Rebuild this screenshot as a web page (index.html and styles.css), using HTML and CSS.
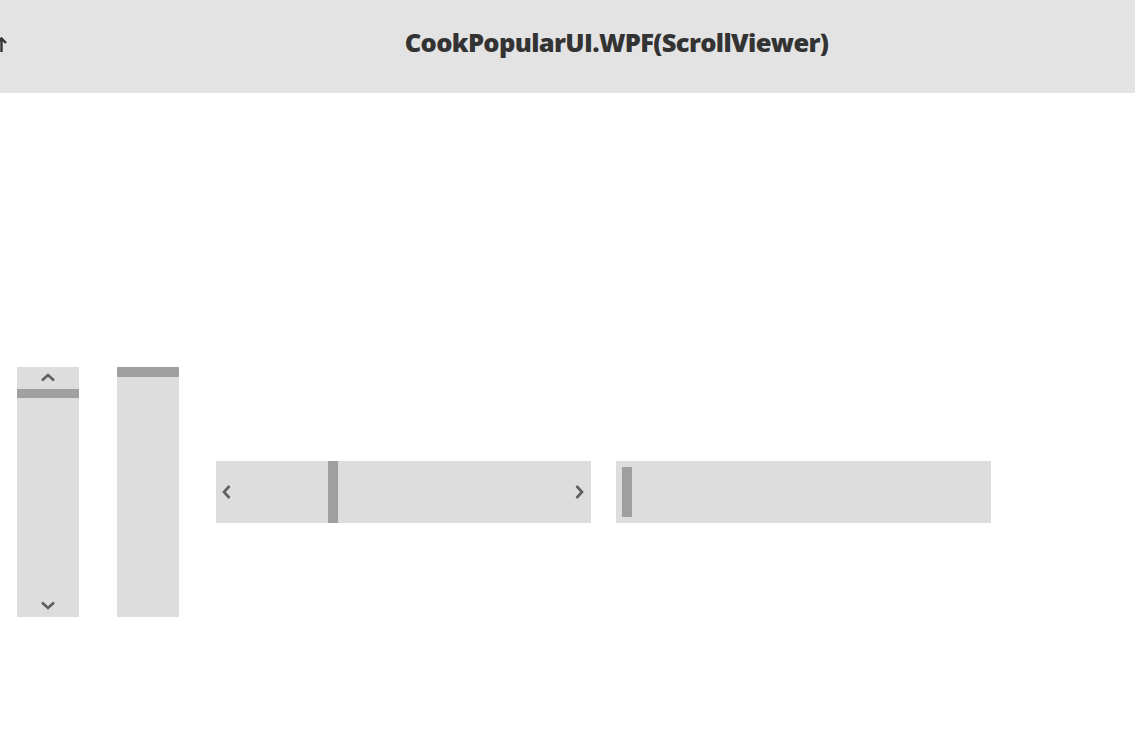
FILE: index.html
```html
<!DOCTYPE html>
<html>
<head>
<meta charset="utf-8">
<link rel="stylesheet" href="styles.css">
</head>
<body>
<header class="header">
  <svg class="back" width="10" height="20" viewBox="0 0 10 20"><path d="M-3 7 L1.5 2.5 L6 7 M1.5 3 L1.5 16" fill="none" stroke="#333" stroke-width="2.4"/></svg>
  <h1 class="title">CookPopularUI.WPF(ScrollViewer)</h1>
</header>
<main class="content">
  <div class="vbar">
    <div class="btn-v up"><svg width="16" height="9" viewBox="0 0 16 9"><path d="M2 7.5 L8 2 L14 7.5" fill="none" stroke="#5f5f5f" stroke-width="2.6"/></svg></div>
    <div class="vtrack"><div class="vthumb"></div></div>
    <div class="btn-v down"><svg width="16" height="9" viewBox="0 0 16 9"><path d="M2 1.5 L8 7 L14 1.5" fill="none" stroke="#5f5f5f" stroke-width="2.6"/></svg></div>
  </div>
  <div class="vbar plain">
    <div class="vthumb2"></div>
  </div>
  <div class="hbar">
    <div class="btn-h left"><svg width="9" height="16" viewBox="0 0 9 16"><path d="M7.5 2 L2 8 L7.5 14" fill="none" stroke="#5f5f5f" stroke-width="2.6"/></svg></div>
    <div class="htrack"><div class="hthumb"></div></div>
    <div class="btn-h right"><svg width="9" height="16" viewBox="0 0 9 16"><path d="M1.5 2 L7 8 L1.5 14" fill="none" stroke="#5f5f5f" stroke-width="2.6"/></svg></div>
  </div>
  <div class="hbar plain2">
    <div class="hthumb2"></div>
  </div>
</main>
</body>
</html>
```
FILE: styles.css
```css
* { box-sizing: border-box; }
html, body { margin: 0; padding: 0; background: #ffffff; }
body { width: 1135px; height: 746px; overflow: hidden; font-family: "Open Sans", "Noto Sans", sans-serif; }
.header {
  position: relative;
  height: 93px;
  background: #e3e3e3;
  display: flex;
  align-items: center;
  justify-content: center;
  padding-left: 98px;
}
.back { position: absolute; left: 0; top: 36px; }
.title {
  margin: 0;
  font-family: "Open Sans", sans-serif;
  font-weight: 800;
  font-size: 25.5px;
  color: #333333;
  letter-spacing: -0.65px;
  transform: translate(0px, -5px);
}
.content {
  display: flex;
  align-items: center;
  padding: 274px 0 0 17px;
}
.vbar {
  width: 62px;
  height: 250px;
  background: #dddddd;
  display: flex;
  flex-direction: column;
}
.vbar.plain { margin-left: 38px; }
.btn-v {
  height: 22px;
  display: flex;
  align-items: center;
  justify-content: center;
  padding-bottom: 2px;
}
.btn-v svg { display: block; }
.vtrack { flex: 1; }
.vthumb { height: 9px; background: #a0a0a0; }
.vthumb2 { height: 10px; background: #a0a0a0; }
.hbar {
  width: 375px;
  height: 62px;
  background: #dddddd;
  display: flex;
  margin-left: 37px;
}
.hbar.plain2 { margin-left: 25px; padding: 6px; }
.btn-h {
  width: 22px;
  display: flex;
  align-items: center;
  justify-content: center;
}
.btn-h.left { width: 20px; }
.btn-h.right { width: 24px; }
.btn-h svg { display: block; }
.htrack { flex: 1; display: flex; padding-left: 92px; }
.hthumb { width: 10px; background: #a0a0a0; }
.hthumb2 { width: 10px; background: #a0a0a0; }
```
